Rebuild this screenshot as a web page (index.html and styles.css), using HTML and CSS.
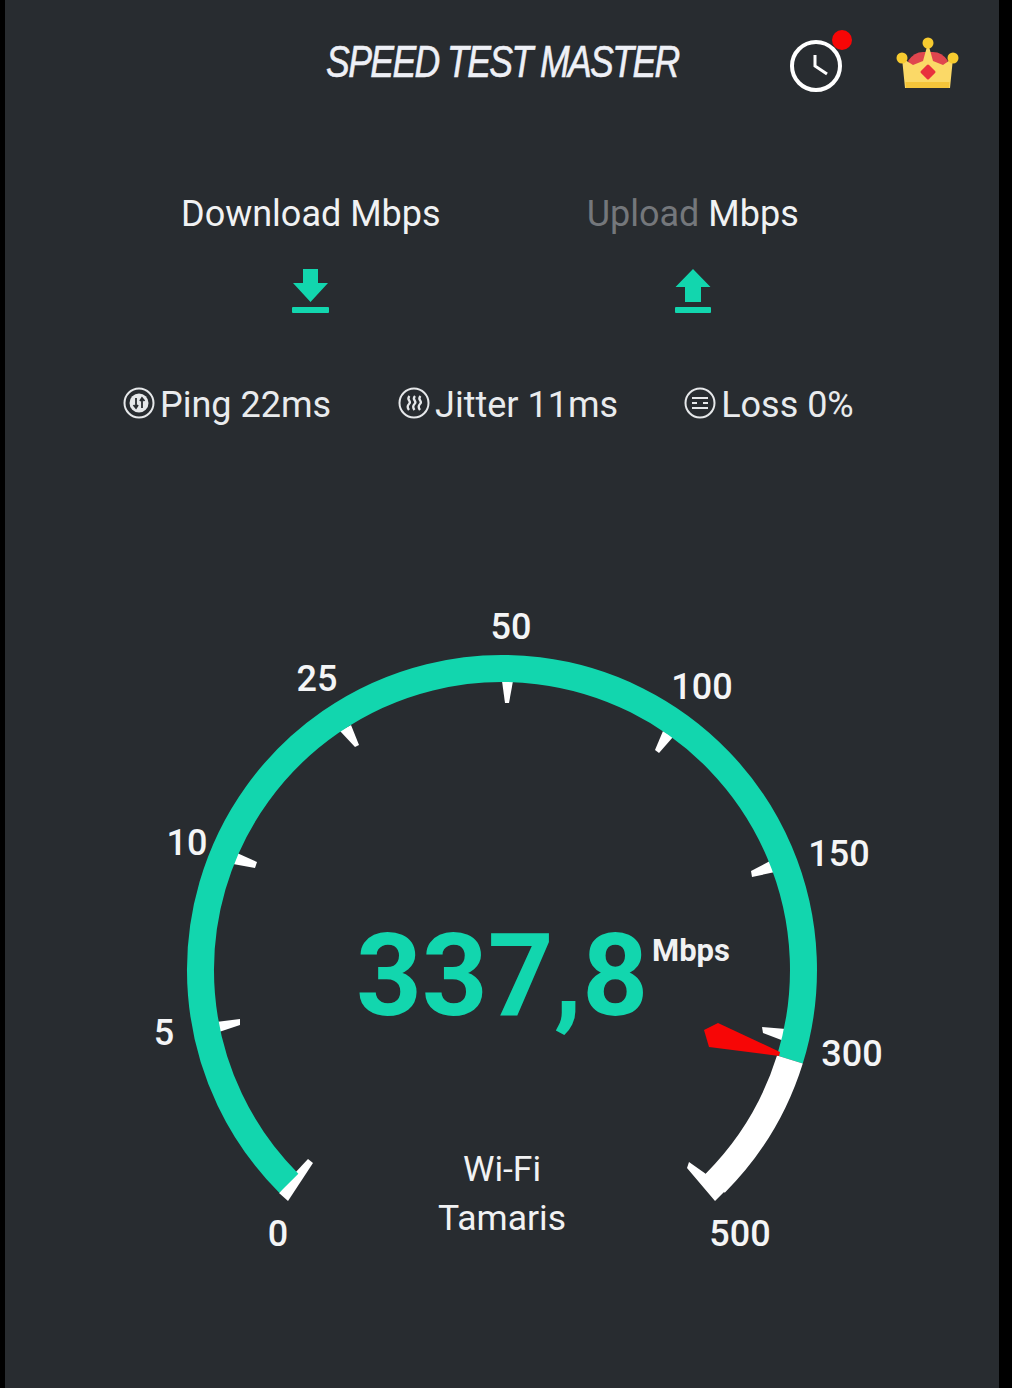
FILE: index.html

```html
<!DOCTYPE html>
<html lang="en">
<head>
  <meta charset="UTF-8" />
  <meta name="viewport" content="width=device-width, initial-scale=1" />
  <title>Speed Test Master</title>
  <link rel="stylesheet" href="styles.css">
</head>
<body>
  <main class="screen">
    <header class="topbar">
      <h1 class="logo"><span class="logo-text">SPEED TEST MASTER</span></h1>
      <div class="history">
        <svg width="52" height="52" viewBox="0 0 52 52">
          <circle cx="26" cy="26" r="24" fill="none" stroke="#fff" stroke-width="4" />
          <path d="M25 15v11l12 8" fill="none" stroke="#fff" stroke-width="3" />
        </svg>
        <span class="dot"></span>
      </div>
      <svg class="crown" width="64" height="54" viewBox="0 0 64 54">
        <path d="M12 24Q18 15 27 15H37Q46 15 52 24L47 32H17Z" fill="#e0464e" />
        <path d="M6 21 17 28 27 24 32 6 37 24 47 28 57 21 54 51H9Z" fill="#fbd967" />
        <path d="M9.500 45H53.500L53 51H10Z" fill="#f5c53a" />
        <circle cx="32" cy="6" r="5.500" fill="#f7cb2f" />
        <circle cx="6" cy="21" r="5.500" fill="#f7cb2f" />
        <circle cx="57" cy="21" r="5.500" fill="#f7cb2f" />
        <path d="M32 29 38 35 32 41 26 35Z" fill="#e9313d" stroke="#e9313d" stroke-width="3" stroke-linejoin="round" />
      </svg>
    </header>

    <section class="rates">
      <div class="rate">
        <h2 class="rate-title">Download Mbps</h2>
        <svg width="38" height="46" viewBox="0 0 38 46">
          <path d="M11 1H26V15H36L18.500 34 1 15H11Z" fill="#12d6ae" />
          <rect x="0" y="39" width="37" height="6" rx="1" fill="#12d6ae" />
        </svg>
      </div>
      <div class="rate">
        <h2 class="rate-title"><span class="muted">Upload</span> Mbps</h2>
        <svg width="38" height="46" viewBox="0 0 38 46">
          <path d="M19 1 36.500 19H27V34H11V19H1.500Z" fill="#12d6ae" />
          <rect x="1" y="39" width="36" height="6" rx="1" fill="#12d6ae" />
        </svg>
      </div>
    </section>

    <section class="stats">
      <div class="stat">
        <svg width="32" height="32" viewBox="0 0 32 32">
          <circle cx="16" cy="16" r="14.500" fill="none" stroke="#e6e8ea" stroke-width="2" />
          <circle cx="16" cy="16" r="9.500" fill="#e6e8ea" />
          <path d="M13 11v10M10.500 18 13 21 15 18M19 21V11M17 14 19 11 21.500 14" fill="none" stroke="#282c30" stroke-width="1.800" />
        </svg>
        <span>Ping 22ms</span>
      </div>
      <div class="stat">
        <svg width="32" height="32" viewBox="0 0 32 32">
          <circle cx="16" cy="16" r="14.500" fill="none" stroke="#e6e8ea" stroke-width="2" />
          <path d="M11.500 9C7.500 13 14.500 14 11 17 9 19 9.500 21 11 23M17 9C13 13 20 14 16.500 17 14.500 19 15 21 16.500 23M22.500 9C18.500 13 25.500 14 22 17 20 19 20.500 21 22 23" fill="none" stroke="#e6e8ea" stroke-width="2.300" />
        </svg>
        <span>Jitter 11ms</span>
      </div>
      <div class="stat stat-loss">
        <svg width="32" height="32" viewBox="0 0 32 32">
          <circle cx="16" cy="16" r="14.500" fill="none" stroke="#e6e8ea" stroke-width="2" />
          <path d="M8 11H24M8 21H24M8 16H13M19 16H24" fill="none" stroke="#e6e8ea" stroke-width="2.200" />
        </svg>
        <span>Loss 0%</span>
      </div>
    </section>

    <section class="gauge">
      <svg class="dial" width="994" height="740" viewBox="5 600 994 740">
        <g fill="#fff">
          <path d="M502 681 513 681 509 703 505 703Z" />
          <path d="M340 731 351 725 359 745 355 747Z" />
          <path d="M663 731 673 737 659 753 655 750Z" />
          <path d="M770 861 775 872 752 877 751 871Z" />
          <path d="M786 1029 784 1041 763 1033 762 1027Z" />
          <path d="M216 1022 219 1032 240 1025 240 1019Z" />
          <path d="M237 853 233 864 255 868 257 862Z" />
          <path d="M279 1193 288 1201 313 1163 308 1159 294 1174Z" />
        </g>
        <path class="arc-done" d="M288.800 1183.200A301.500 301.500 0 1 1 789.900 1059.500" />
        <path class="arc-rest" d="M789.900 1059.500A301.500 301.500 0 0 1 715.200 1183.200" />
        <path d="M730 1186 715 1201 687 1168 689 1162 706 1174 712 1168Z" fill="#fff" />
        <path d="M780 1052 779 1056 709 1047 704 1030 718 1023Z" fill="#f70606" />
        <g class="dial-label">
          <text x="511" y="639" text-anchor="middle">50</text>
          <text x="317" y="691" text-anchor="middle">25</text>
          <text x="702" y="699" text-anchor="middle">100</text>
          <text x="187" y="855" text-anchor="middle">10</text>
          <text x="839" y="866" text-anchor="middle">150</text>
          <text x="164" y="1045" text-anchor="middle">5</text>
          <text x="852" y="1066" text-anchor="middle">300</text>
          <text x="278" y="1246" text-anchor="middle">0</text>
          <text x="740" y="1246" text-anchor="middle">500</text>
        </g>
        <text class="reading" x="502" y="1015" text-anchor="middle">337,8</text>
        <text class="unit" x="691" y="961" text-anchor="middle">Mbps</text>
        <text class="network" x="502" y="1181" text-anchor="middle">Wi-Fi</text>
        <text class="network" x="502" y="1230" text-anchor="middle">Tamaris</text>
      </svg>
    </section>
  </main>
</body>
</html>
```

FILE: styles.css

```css
body {
  margin: 0;
  background-color: #000;
  font-family: Roboto, "Liberation Sans", sans-serif;
}
h1, h2 {
  margin: 0;
  font-weight: 400;
}
.screen {
  width: 994px;
  height: 1388px;
  margin-left: 5px;
  background-color: #282c30;
  color: #f1f2f3;
  overflow: hidden;
}
.topbar {
  display: flex;
  align-items: flex-start;
  height: 120px;
  padding-top: 29px;
  box-sizing: border-box;
}
.logo {
  width: 354px;
  margin: 9px 0 0 321px;
  font-family: "Liberation Sans", sans-serif;
  font-size: 44px;
  font-style: italic;
  line-height: 48px;
  letter-spacing: -2px;
  color: #eef0f6;
  white-space: nowrap;
}
.logo-text {
  display: inline-block;
  transform: scaleX(0.81);
  transform-origin: left center;
  -webkit-text-stroke: 0.6px #eef0f6;
}
.history {
  position: relative;
  width: 52px;
  height: 52px;
  margin: 11px 0 0 110px;
}
.history svg {
  display: block;
}
.dot {
  position: absolute;
  top: -10px;
  right: -10px;
  width: 20px;
  height: 20px;
  border-radius: 50%;
  background-color: #f70606;
}
.crown {
  margin: 8px 0 0 54px;
}
.rates {
  display: flex;
  height: 263px;
  padding-left: 176px;
}
.rate {
  display: flex;
  flex-direction: column;
  align-items: center;
  gap: 32px;
}
.rate + .rate {
  margin-left: 146px;
}
.rate-title {
  margin-top: 72px;
  font-size: 36px;
  line-height: 44px;
}
.muted {
  color: #74777b;
}
.stats {
  display: flex;
  gap: 67px;
  padding-left: 118px;
  font-size: 36px;
  line-height: 44px;
  color: #e9ebed;
}
.stat {
  display: flex;
  align-items: center;
  gap: 5px;
}
.stat svg {
  margin-top: -4px;
}
.stat-loss {
  margin-left: -1px;
}
.gauge {
  margin-top: 173px;
}
.dial {
  display: block;
}
.arc-done, .arc-rest {
  fill: none;
  stroke-width: 27;
}
.arc-done {
  stroke: #12d6ae;
}
.arc-rest {
  stroke: #fff;
}
.dial-label {
  font-size: 36px;
  font-weight: 500;
  fill: #f4f5f6;
}
.reading {
  font-size: 115px;
  font-weight: 700;
  fill: #12d6ae;
}
.unit {
  font-size: 31px;
  font-weight: 700;
  fill: #f1f2f3;
}
.network {
  font-size: 35.500px;
  fill: #f1f2f3;
}
```
